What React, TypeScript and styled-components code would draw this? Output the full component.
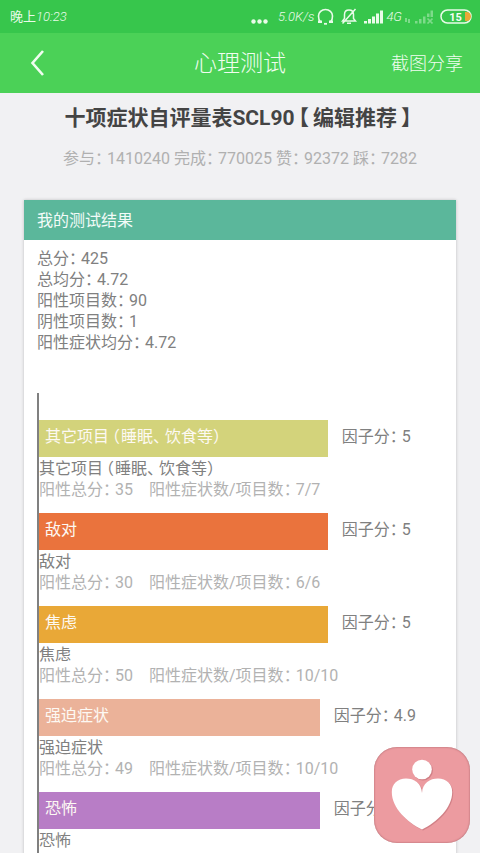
import React, { Fragment } from "react";
import styled, { createGlobalStyle } from "styled-components";

const GlobalStyle = createGlobalStyle`
  *, *::before, *::after { box-sizing: border-box; }
  body {
    margin: 0;
    background: #f1f1f3;
    font-family: Roboto, "Noto Sans CJK SC", sans-serif;
    font-size: 16px;
    line-height: 21px;
    color: #808080;
  }
  button { border: 0; padding: 0; background: none; font: inherit; color: inherit; cursor: pointer; }
  h1, h2, h3, p { margin: 0; font: inherit; }
`;

const Screen = styled.div`
  position: relative;
  height: 100vh;
  display: flex;
  flex-direction: column;
`;

const StatusBar = styled.div`
  flex: none;
  height: 33px;
  padding: 0 8px 0 10px;
  display: flex;
  align-items: center;
  justify-content: space-between;
  background: #37c64c;
  color: #e9fbe9;
  font-size: 13px;
`;

const StatusIcons = styled.div`
  display: flex;
  align-items: center;
  gap: 7px;
`;

const IconGroup = styled.div`
  display: flex;
  align-items: center;
  gap: 3px;
`;

const Slanted = styled.span`
  font-style: italic;
  font-weight: 300;
`;

const NavBar = styled.header`
  flex: none;
  height: 60px;
  padding: 0 17px;
  display: grid;
  grid-template-columns: 1fr auto 1fr;
  align-items: center;
  background: #4bd157;
  color: #f0fdf0;
  font-weight: 300;
`;

const BackButton = styled.button`
  justify-self: start;
  display: flex;
  padding: 0 10px;
`;

const NavTitle = styled.h1`
  padding-top: 2px;
  font-size: 23px;
  line-height: 30px;
  font-weight: 300;
`;

const ShareButton = styled.button`
  justify-self: end;
  padding-top: 2px;
  font-size: 18px;
  line-height: 30px;
`;

const Content = styled.main`
  flex: 1;
  min-height: 0;
  overflow-y: auto;
  scrollbar-width: none;
`;

const Mark = styled.span<{ $opening: boolean }>`
  font-feature-settings: "halt";
  padding: ${(p) => (p.$opening ? "0 1px 0 3px" : "0 4px 0 0")};
`;

const Heading = styled.h2`
  padding-top: 10px;
  text-align: center;
  font-size: 21px;
  line-height: 30px;
  font-weight: 700;
  color: #444;

  ${Mark} {
    padding: 0 4px;
  }
`;

const Counts = styled.p`
  margin-top: 15px;
  text-align: center;
  color: #b0b0b0;
`;

const Card = styled.section`
  margin: 31px 24px 0;
  background: #fff;
  box-shadow: 0 0 3px rgba(0, 0, 0, 0.22);
`;

const CardHeader = styled.h2`
  padding: 10px 13px 9px;
  background: #5bb79b;
  color: #f2fbf8;
`;

const Summary = styled.div`
  padding: 8px 13px 40px;
`;

const Chart = styled.div`
  margin: 0 16px 0 13px;
  padding-top: 27px;
  border-left: 2px solid #808080;
`;

const Factor = styled.article`
  padding-bottom: 13px;
`;

const BarRow = styled.div`
  display: flex;
  gap: 14px;
  height: 37px;
  line-height: 33px;
  white-space: nowrap;
`;

const Bar = styled.div<{ $color: string }>`
  flex: none;
  padding-left: 6px;
  background: ${(p) => p.$color};
  color: #fdf9f3;
`;

const FactorName = styled.h3`
  padding-top: 1px;
`;

const FactorDetail = styled.p`
  color: #b2b2b2;
`;

const FactorTotals = styled.span`
  margin-right: 16px;
`;

const FloatingButton = styled.button`
  position: absolute;
  right: 10px;
  bottom: 10px;
  width: 96px;
  height: 96px;
  border-radius: 23px;
  background: #ec9ba0;
  box-shadow: inset 0 0 2px #9c5a60;
`;

/* Sets full-width punctuation on a three-quarter width. */
function Typeset({ text }: { text: string }) {
  return (
    <>
      {text.split(/([：、（）【】])/).map((part, i) =>
        i % 2 ? (
          <Mark key={i} $opening={part === "（" || part === "【"}>
            {part}
          </Mark>
        ) : (
          <Fragment key={i}>{part}</Fragment>
        )
      )}
    </>
  );
}

const summary = ["总分：425", "总均分：4.72", "阳性项目数：90", "阴性项目数：1", "阳性症状均分：4.72"];

const factors = [
  { name: "其它项目（睡眠、饮食等）", score: "5", width: 72, color: "#d3d37b", total: "35", ratio: "7/7" },
  { name: "敌对", score: "5", width: 72, color: "#ea733d", total: "30", ratio: "6/6" },
  { name: "焦虑", score: "5", width: 72, color: "#e9a837", total: "50", ratio: "10/10" },
  { name: "强迫症状", score: "4.9", width: 70, color: "#ebb299", total: "49", ratio: "10/10" },
  { name: "恐怖", score: "4.9", width: 70, color: "#b87dc6" },
];

const DotsIcon = () => (
  <svg width="20" height="22" viewBox="0 0 20 22" fill="currentColor" aria-hidden="true">
    <circle cx="2.500" cy="15.500" r="2.200" />
    <circle cx="8.500" cy="15.500" r="2.200" />
    <circle cx="14.500" cy="15.500" r="2.200" />
  </svg>
);

const HeadphonesIcon = () => (
  <svg width="17" height="17" viewBox="0 0 17 17" fill="none" stroke="currentColor" strokeWidth="1.600" aria-hidden="true">
    <path d="M3.200 13.500C1.800 12 1.500 10 1.500 8a7 6.500 0 0 1 14 0c0 2-.3 4-1.700 5.500" />
    <path d="M1 13.800h4M12 13.800h4" strokeWidth="2.600" />
    <path d="M7 15.800h3" strokeWidth="1.800" />
  </svg>
);

const MutedBellIcon = () => (
  <svg width="16" height="17" viewBox="0 0 16 17" fill="none" stroke="currentColor" strokeWidth="1.500" aria-hidden="true">
    <path d="M1.500 13h13L12.500 10.500V6.500C12.500 3.700 10.700 2 8 2S3.500 3.700 3.500 6.500v4zM6 15.300h4M14.500 1 1.500 15.500" />
  </svg>
);

const SignalIcon = () => (
  <svg width="19" height="14" viewBox="0 0 19 14" fill="currentColor" aria-hidden="true">
    <path d="M0 11h3v2.500H0zM4 9h3v4.500H4zM8 6.500h3v7H8zM12 3.500h3v10h-3zM16 .5h3v13h-3z" />
  </svg>
);

const NoSignalIcon = () => (
  <svg width="28" height="14" viewBox="0 0 28 14" fill="currentColor" opacity=".4" aria-hidden="true">
    <path d="M0 8h2v4H0zM3 9h2v4H3zM10 11h2.500v2.500H10zM14 9h2.500v4.500H14zM18 6.500h2.500v7H18zM22 3.500h2.500V7H22zM25.500.5H28V7h-2.500z" />
    <path d="m22.500 8.500 5 5m0-5-5 5" stroke="currentColor" strokeWidth="1.600" />
  </svg>
);

const BatteryIcon = () => (
  <svg width="32" height="15" viewBox="0 0 32 15" role="img" aria-label="15">
    <rect x="1" y="1" width="30" height="13" rx="6.500" fill="none" stroke="#e9fbe9" strokeWidth="1.500" />
    <path d="M25 3h1.500a4.500 4.500 0 0 1 0 9H25z" fill="#e9a837" />
    <text x="15.500" y="11.500" textAnchor="middle" fontSize="11" fontWeight="700" fill="#f4fff4">15</text>
  </svg>
);

const HEART =
  "M48 46C47.500 36 40 31.500 32 31.500 23.500 31.500 17.800 37 17.800 45 17.800 61 33 75 48 82.500 63 75 78.200 61 78.200 45 78.200 37 72.500 31.500 64 31.500 56 31.500 48.500 36 48 46z";

export default function App() {
  return (
    <Screen>
      <GlobalStyle />
      <StatusBar>
        <span>晚上<Slanted>10:23</Slanted></span>
        <StatusIcons>
          <DotsIcon />
          <IconGroup>
            <Slanted>5.0K/s</Slanted>
            <HeadphonesIcon />
          </IconGroup>
          <MutedBellIcon />
          <IconGroup>
            <SignalIcon />
            <Slanted>4G</Slanted>
            <NoSignalIcon />
          </IconGroup>
          <BatteryIcon />
        </StatusIcons>
      </StatusBar>
      <NavBar>
        <BackButton aria-label="返回">
          <svg width="20" height="30" viewBox="0 0 20 30" fill="none" stroke="currentColor" strokeWidth="2.600" aria-hidden="true">
            <path d="M16 3 5.500 15 16 27" />
          </svg>
        </BackButton>
        <NavTitle>心理测试</NavTitle>
        <ShareButton>截图分享</ShareButton>
      </NavBar>
      <Content>
        <Heading><Typeset text="十项症状自评量表SCL90【编辑推荐】" /></Heading>
        <Counts><Typeset text="参与：1410240 完成：770025 赞：92372 踩：7282" /></Counts>
        <Card>
          <CardHeader>我的测试结果</CardHeader>
          <Summary>
            {summary.map((line) => (
              <p key={line}><Typeset text={line} /></p>
            ))}
          </Summary>
          <Chart>
            {factors.map((f) => (
              <Factor key={f.name}>
                <BarRow>
                  <Bar $color={f.color} style={{ width: `${f.width}%` }}><Typeset text={f.name} /></Bar>
                  <span><Typeset text={`因子分：${f.score}`} /></span>
                </BarRow>
                <FactorName><Typeset text={f.name} /></FactorName>
                {f.total && (
                  <FactorDetail>
                    <FactorTotals><Typeset text={`阳性总分：${f.total}`} /></FactorTotals>
                    <Typeset text={`阳性症状数/项目数：${f.ratio}`} />
                  </FactorDetail>
                )}
              </Factor>
            ))}
          </Chart>
        </Card>
      </Content>
      <FloatingButton aria-label="心理测试">
        <svg width="96" height="96" viewBox="0 0 96 96" aria-hidden="true">
          <g fill="#b8676e" opacity=".5" transform="translate(1 1)">
            <circle cx="48" cy="22.500" r="10" />
            <path d={HEART} />
          </g>
          <g fill="#fff">
            <circle cx="48" cy="22.500" r="9.800" />
            <path d={HEART} />
          </g>
        </svg>
      </FloatingButton>
    </Screen>
  );
}
